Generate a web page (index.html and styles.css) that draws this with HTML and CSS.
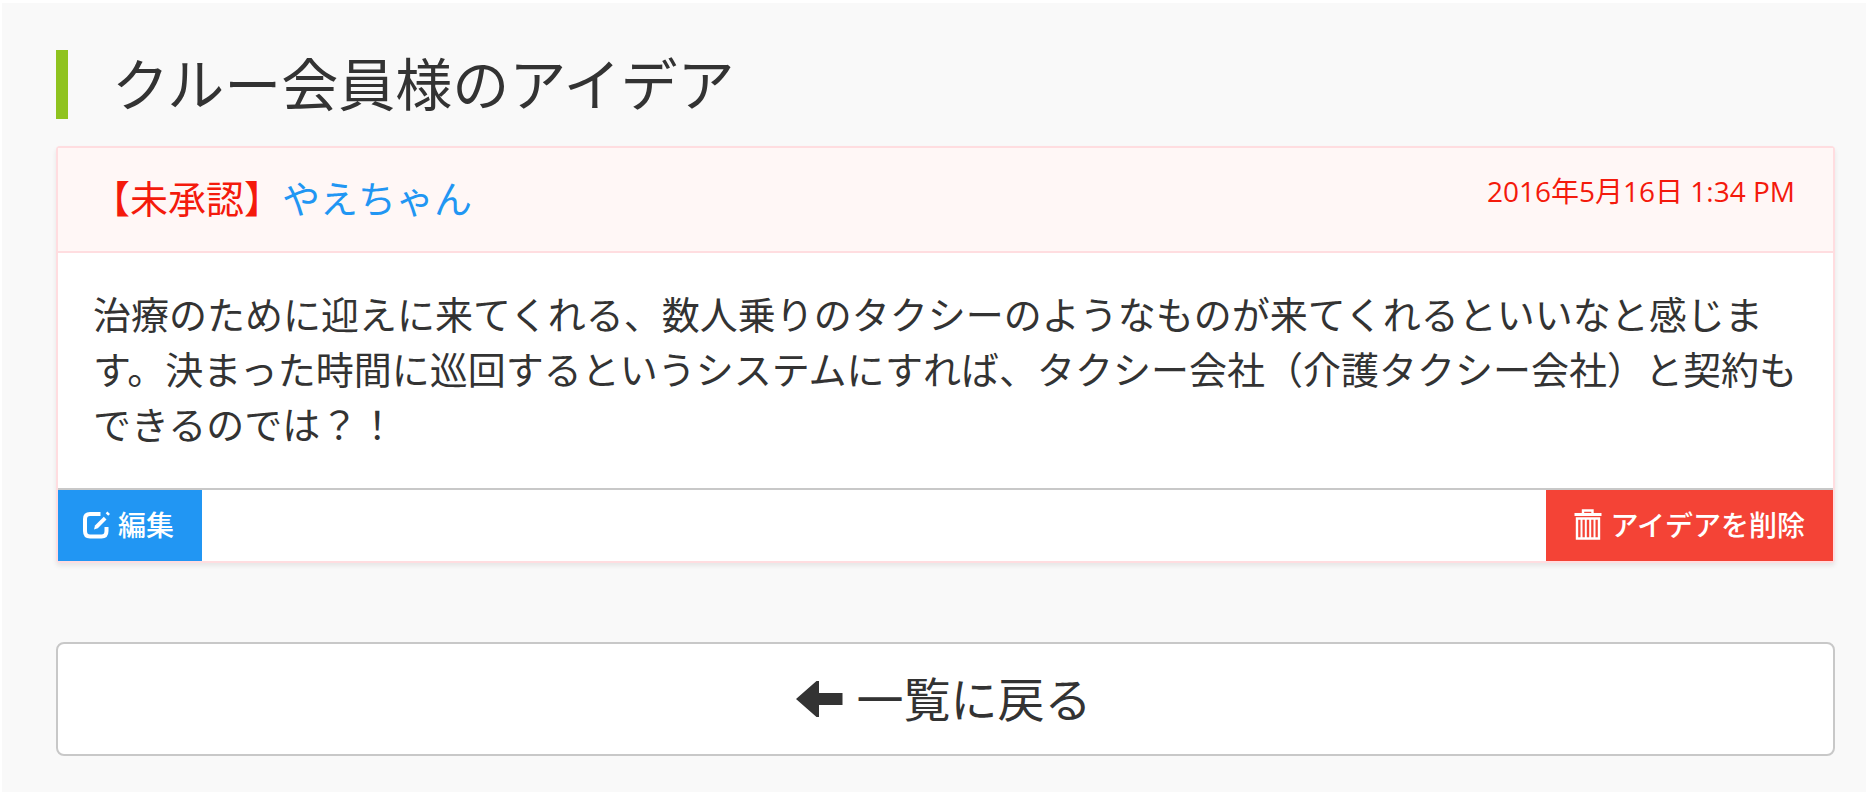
FILE: index.html
```html
<!DOCTYPE html>
<html lang="ja">
<head>
<meta charset="utf-8">
<title>クルー会員様のアイデア</title>
<link rel="stylesheet" href="styles.css">
</head>
<body>
<main class="page">
  <h1 class="title">クルー会員様のアイデア</h1>
  <article class="idea">
    <header class="idea-head">
      <p class="author"><span class="status">【未承認】</span><a class="author-link" href="#">やえちゃん</a></p>
      <time class="date" datetime="2016-05-16T13:34">2016年5月16日 1:34 PM</time>
    </header>
    <p class="idea-body">治療のために迎えに来てくれる、数人乗りのタクシーのようなものが来てくれるといいなと感じま<br>す。決まった時間に巡回するというシステムにすれば、タクシー会社（介護タクシー会社）と契約も<br>できるのでは？！</p>
    <footer class="idea-actions">
      <button class="btn btn-edit" type="button">
        <svg class="icon" viewBox="0 0 28 28" aria-hidden="true">
          <path d="M18.500 3H8Q3 3 3 8V20Q3 25.500 8 25.500H19.500Q24.500 25.500 24.500 20V16" fill="none" stroke="currentColor" stroke-width="4"/>
          <path d="M12 18.500L13 14.500L21.800 5.700L24.500 8.400L15.800 17.200Z" fill="currentColor"/>
          <path d="M25.400 .5L28 3L26.200 4.800L23.700 2.300Z" fill="currentColor"/>
        </svg>
        編集
      </button>
      <button class="btn btn-delete" type="button">
        <svg class="icon icon-trash" viewBox="0 0 28 32" aria-hidden="true">
          <path d="M9 4V1.500H18.500V4" fill="none" stroke="currentColor" stroke-width="2.400"/>
          <path d="M.5 4H27.500V7H.500Z" fill="currentColor"/>
          <path d="M3 9.500H25V29.500H3Z" fill="none" stroke="currentColor" stroke-width="2.400"/>
          <path d="M7.500 9V29M11.800 9V29M16.200 9V29M20.500 9V29" fill="none" stroke="currentColor" stroke-width="2"/>
        </svg>
        アイデアを削除
      </button>
    </footer>
  </article>
  <a class="back" href="#">
    <svg class="icon-arrow" viewBox="0 0 47 36" aria-hidden="true"><path d="M0 18L20.500 0H23V12H46.500V24H23V36H20.500Z" fill="currentColor"/></svg>
    一覧に戻る
  </a>
</main>
</body>
</html>
```
FILE: styles.css
```css
* { box-sizing: border-box; }

body {
  margin: 0;
  background: #fff;
  color: #333;
  font-family: "Open Sans", "Noto Sans CJK JP", sans-serif;
  font-size: 38px;
  line-height: 55px;
}

.page {
  min-height: calc(100vh - 4px);
  margin: 3px 0 0 2px;
  border-bottom: 1px solid #fff;
  padding: 47px 31px 36px 54px;
  background: #f9f9f9;
}

.title {
  margin: 0 0 27px;
  padding-left: 44px;
  border-left: 12px solid #8fc31f;
  font-size: 57px;
  font-weight: 400;
  line-height: 69px;
}

.idea {
  border: 2px solid #ffdde0;
  border-radius: 4px;
  background: #fff;
  box-shadow: 0 3px 5px rgba(0, 0, 0, .08);
}

.idea-head {
  display: flex;
  justify-content: space-between;
  align-items: flex-start;
  padding: 23px 38px 25px 34px;
  border-bottom: 2px solid #ffdde0;
  background: #fff7f6;
}

.author { margin: 0; }
.status, .date { color: #f41a0c; }
.author-link { color: #2196f3; text-decoration: none; }

.date {
  font-size: 28px;
  line-height: 40px;
}

.idea-body {
  margin: 0;
  padding: 34px 24px 36px 35px;
  white-space: nowrap;
}

.idea-actions {
  display: flex;
  justify-content: space-between;
  border-top: 2px solid #c8c8c8;
}

.btn {
  display: flex;
  align-items: center;
  gap: 8px;
  height: 71px;
  padding: 0 28px 2px;
  border: 0;
  color: #fff;
  font: inherit;
  font-size: 28px;
  font-weight: 500;
  line-height: 40px;
}

.btn-edit { padding: 0 28px 2px 24px; background: #2196f3; }
.btn-delete { background: #f44336; }
.icon { width: 28px; height: 28px; }
.icon-trash { height: 32px; }

.back {
  display: flex;
  justify-content: center;
  align-items: center;
  gap: 14px;
  margin-top: 79px;
  padding: 20px 24px 20px 20px;
  border: 2px solid #c8c8c8;
  border-radius: 8px;
  background: #fff;
  color: #333;
  font-size: 47px;
  line-height: 70px;
  text-decoration: none;
}

.icon-arrow { width: 47px; height: 36px; }
```
